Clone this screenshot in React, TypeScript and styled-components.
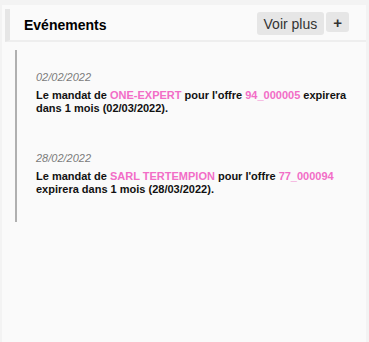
import React from "react";
import styled, { createGlobalStyle } from "styled-components";

const GlobalStyle = createGlobalStyle`
  html, body {
    margin: 0;
    padding: 0;
    height: 100%;
    background: #f3f3f3;
    font-family: "Liberation Sans", Arial, sans-serif;
  }
  #root {
    height: 100%;
  }
`;

const Card = styled.div`
  box-sizing: border-box;
  height: 337px;
  margin: 5px 3px 0 2px;
  padding: 4px 0 0 3px;
  background: #fafafa;
`;

const Header = styled.div`
  display: flex;
  align-items: center;
  height: 31px;
  border-left: 5px solid #e6e6e6;
  border-bottom: 2px solid #eeeeee;
  padding: 0 17px 0 14px;
`;

const Title = styled.h2`
  flex: 1;
  margin: 0;
  font-size: 14px;
  font-weight: bold;
  color: #000;
`;

const Button = styled.button<{ $bold?: boolean }>`
  height: ${(p) => (p.$bold ? "20px" : "23px")};
  align-self: flex-start;
  margin-top: 3px;
  margin-left: 2px;
  padding: 0 7px;
  border: none;
  border-radius: 3px;
  background: #e6e6e6;
  color: #333;
  font-family: "Liberation Sans", Arial, sans-serif;
  font-size: ${(p) => (p.$bold ? "15px" : "14px")};
  font-weight: ${(p) => (p.$bold ? "bold" : "normal")};
  line-height: 1;
  cursor: pointer;
`;

const Timeline = styled.div`
  margin: 8px 0 0 10px;
  padding: 21px 0 26px 19px;
  border-left: 2px solid #b0b0b0;
  display: flex;
  flex-direction: column;
  gap: 37px;
`;

const Item = styled.div`
  display: flex;
  flex-direction: column;
`;

const Date = styled.div`
  font-size: 11px;
  font-style: italic;
  color: #7a7a7a;
  line-height: 13px;
  margin-bottom: 5px;
`;

const Message = styled.div`
  font-size: 11px;
  font-weight: bold;
  color: #111;
  line-height: 13px;
`;

const Hl = styled.span`
  color: #f26dc7;
`;

const events = [
  { date: "02/02/2022", company: "ONE-EXPERT", offer: "94_000005", until: "02/03/2022" },
  { date: "28/02/2022", company: "SARL TERTEMPION", offer: "77_000094", until: "28/03/2022" },
];

export default function App() {
  return (
    <>
      <GlobalStyle />
      <Card>
        <Header>
          <Title>Evénements</Title>
          <Button>Voir plus</Button>
          <Button $bold>+</Button>
        </Header>
        <Timeline>
          {events.map((e) => (
            <Item key={e.date}>
              <Date>{e.date}</Date>
              <Message>
                Le mandat de <Hl>{e.company}</Hl> pour l'offre <Hl>{e.offer}</Hl> expirera
                dans 1 mois ({e.until}).
              </Message>
            </Item>
          ))}
        </Timeline>
      </Card>
    </>
  );
}
